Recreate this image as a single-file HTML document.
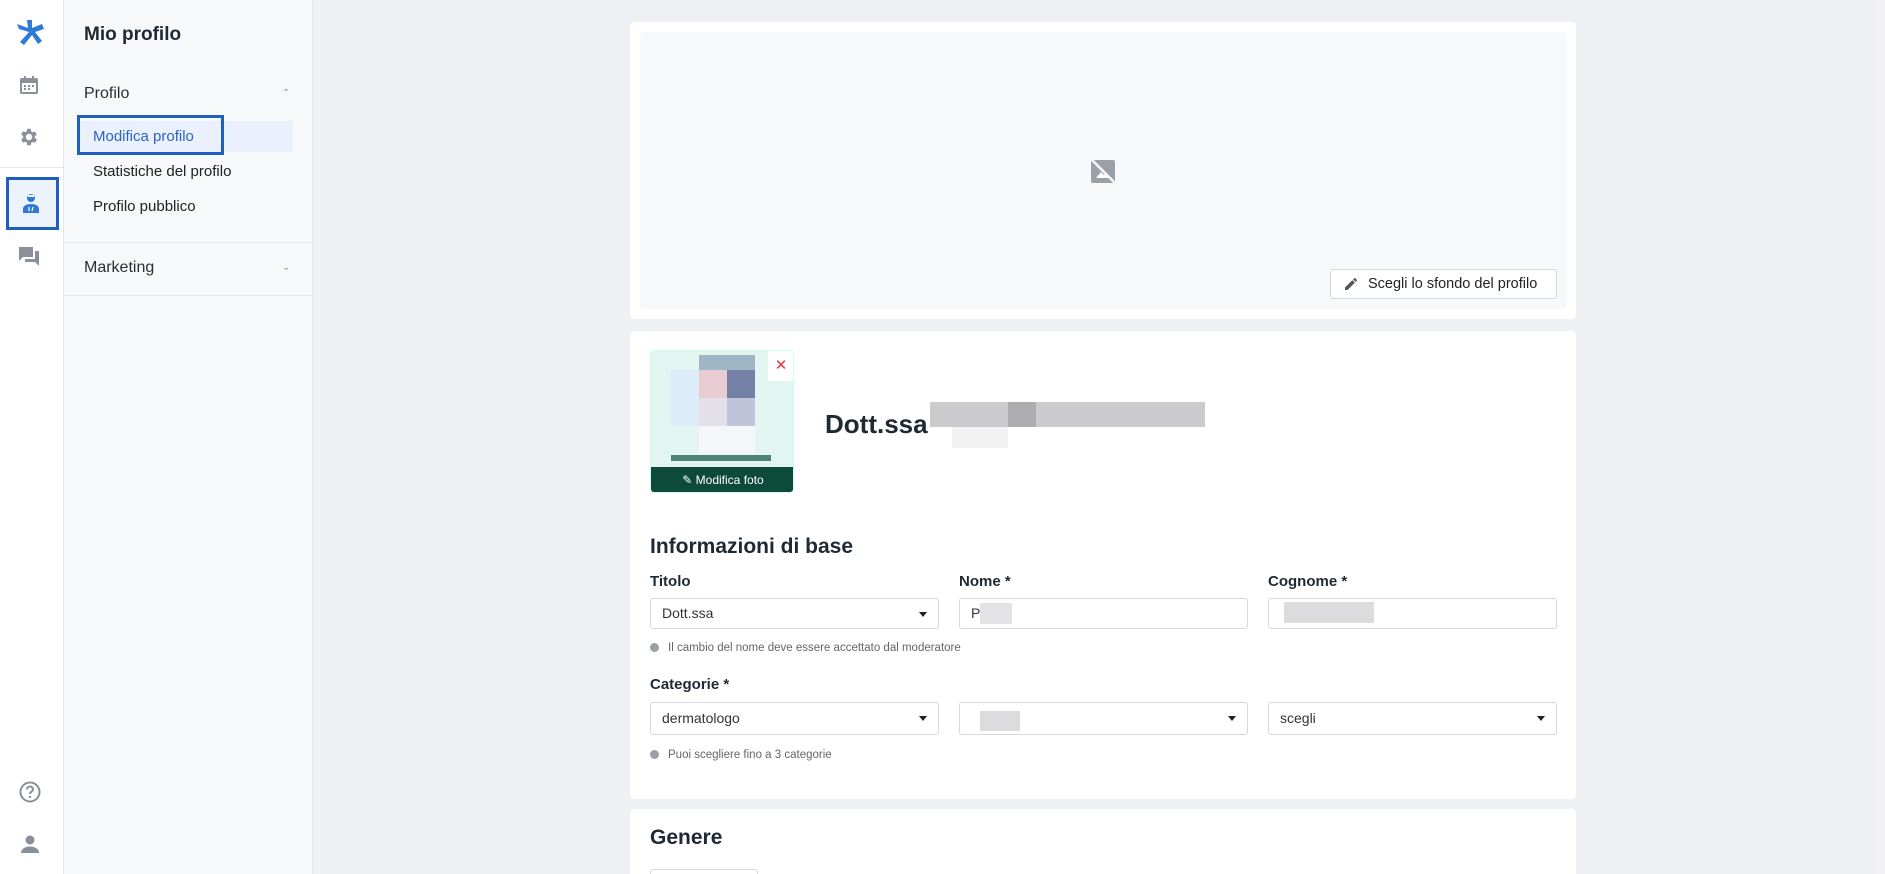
<!DOCTYPE html>
<html style="overflow:hidden;height:874px"><head><meta charset="utf-8"><style>
*{box-sizing:border-box;margin:0;padding:0}
body{width:1885px;height:874px;overflow:hidden;background:#eef0f4;font-family:"Liberation Sans",Arial,sans-serif;color:#1f2933;position:relative}
.abs{position:absolute}
.rail{left:0;top:0;width:64px;height:874px;background:#fff;border-right:1px solid #e3e6ea}
.side{left:64px;top:0;width:249px;height:874px;background:#f7f8fa;border-right:1px solid #e3e6ea}
.card{background:#fff;border-radius:4px;position:absolute}
.lbl{font-size:15px;font-weight:bold;color:#1f2933}
.field{position:absolute;height:31px;border:1px solid #d5d9de;border-radius:3px;background:#fff;font-size:14px;padding:0 11px;line-height:29px;color:#333}
.caret{position:absolute;right:11px;top:13px;width:0;height:0;border-left:4px solid transparent;border-right:4px solid transparent;border-top:5px solid #222}
.note{font-size:11.5px;color:#666;position:absolute}
.note:before{content:"";display:inline-block;width:9px;height:9px;border-radius:50%;background:#9aa0a6;margin-right:9px;vertical-align:-1px}
.blur{position:absolute;background:#d9d9dc}
</style></head><body>
<div class="abs rail">
 <svg class="abs" style="left:17px;top:20px" width="28" height="26" viewBox="0 0 28 26"><g fill="#2f7ad8"><path d="M2 9l10 3-9 10 4 3 8-10 6 9 4-3-7-9 9-3-2-5-10 4 0-8h-5l1 8-11-4z"/></g></svg>
 <svg class="abs" style="left:19px;top:75px" width="20" height="20" viewBox="0 0 20 20"><rect x="1" y="3" width="18" height="16" rx="2" fill="#8a9099"/><rect x="3" y="8" width="14" height="9" fill="#fff"/><rect x="5" y="1" width="2" height="4" fill="#8a9099"/><rect x="13" y="1" width="2" height="4" fill="#8a9099"/><g fill="#8a9099"><rect x="5" y="10" width="2" height="2"/><rect x="9" y="10" width="2" height="2"/><rect x="13" y="10" width="2" height="2"/><rect x="5" y="13" width="2" height="2"/><rect x="9" y="13" width="2" height="2"/></g></svg>
 <svg class="abs" style="left:18px;top:126px" width="22" height="22" viewBox="0 0 24 24"><path fill="#8a9099" d="M19.4 13a7.5 7.5 0 000-2l2.1-1.6-2-3.5-2.5 1a7 7 0 00-1.7-1L15 3h-4l-.4 2.7a7 7 0 00-1.7 1l-2.5-1-2 3.5L6.6 11a7.5 7.5 0 000 2l-2.1 1.6 2 3.5 2.5-1a7 7 0 001.7 1L11 21h4l.4-2.7a7 7 0 001.7-1l2.5 1 2-3.5zM13 15.5a3.5 3.5 0 110-7 3.5 3.5 0 010 7z" transform="translate(-1 0)"/></svg>
 <div class="abs" style="left:0;top:167px;width:64px;height:1px;background:#e3e6ea"></div>
 <div class="abs" style="left:6px;top:177px;width:53px;height:53px;border:3px solid #1e5fbf;background:#edf3fd"></div>
 <svg class="abs" style="left:21px;top:192px" width="20" height="22" viewBox="0 0 20 22"><circle cx="10" cy="6" r="4" fill="#2f7ad8"/><rect x="7" y="3" width="6" height="2" fill="#fff"/><path d="M2 21v-4c0-3 3-5 8-5s8 2 8 5v4z" fill="#2f7ad8"/><path d="M8 15v4M12 15l-1 4" stroke="#fff" stroke-width="1.3"/></svg>
 <svg class="abs" style="left:18px;top:245px" width="22" height="22" viewBox="0 0 22 22"><path d="M1 2h14v10H5l-4 4z" fill="#8a9099"/><path d="M17 6h4v15l-4-4H7v-3h10z" fill="#8a9099"/></svg>
 <svg class="abs" style="left:19px;top:781px" width="22" height="22" viewBox="0 0 22 22"><circle cx="11" cy="11" r="9.5" fill="none" stroke="#8a9099" stroke-width="2"/><path d="M8 8.5a3 3 0 116 0c0 2-3 2.2-3 4.5" fill="none" stroke="#8a9099" stroke-width="2"/><circle cx="11" cy="16" r="1.2" fill="#8a9099"/></svg>
 <svg class="abs" style="left:20px;top:834px" width="20" height="20" viewBox="0 0 20 20"><circle cx="10" cy="6" r="4.5" fill="#8a9099"/><path d="M1 19c0-4 4-6.5 9-6.5s9 2.5 9 6.5z" fill="#8a9099"/></svg>
</div>
<div class="abs side">
 <div class="abs" style="left:20px;top:24px;font-size:19px;font-weight:bold;color:#1f2933">Mio profilo</div>
 <div class="abs" style="left:20px;top:85px;font-size:16px;color:#2a2f36">Profilo</div>
 <div class="abs" style="left:218px;top:88px;font-size:10px;color:#999">&#8963;</div>
 <div class="abs" style="left:15px;top:121px;width:214px;height:31px;background:#eaf1fc"></div>
 <div class="abs" style="left:13px;top:115px;width:147px;height:40px;border:3px solid #1e5fbf"></div>
 <div class="abs" style="left:29px;top:128px;font-size:15px;color:#2a64c8">Modifica profilo</div>
 <div class="abs" style="left:29px;top:163px;font-size:15px;color:#222">Statistiche del profilo</div>
 <div class="abs" style="left:29px;top:198px;font-size:15px;color:#222">Profilo pubblico</div>
 <div class="abs" style="left:0;top:242px;width:249px;height:1px;background:#e3e6ea"></div>
 <div class="abs" style="left:20px;top:259px;font-size:16px;color:#2a2f36">Marketing</div>
 <div class="abs" style="left:218px;top:262px;font-size:10px;color:#999">&#8964;</div>
 <div class="abs" style="left:0;top:295px;width:249px;height:1px;background:#e3e6ea"></div>
</div>
<div class="card" style="left:630px;top:22px;width:946px;height:297px">
 <div class="abs" style="left:10px;top:10px;width:927px;height:277px;background:#f7f8fa;border-radius:4px"></div>
 <svg class="abs" style="left:461px;top:137px" width="25" height="25" viewBox="0 0 25 25"><rect x="0" y="1" width="24" height="23" rx="2" fill="#9aa0a8"/><path d="M5 19l5-6 3 3 2-2 4 5z" fill="#fff"/><path d="M0 0l25 25" stroke="#f7f8fa" stroke-width="2.5"/></svg>
 <div class="abs" style="left:700px;top:247px;width:227px;height:30px;background:#fff;border:1px solid #d5d9de;border-radius:3px;font-size:14.5px;line-height:28px;padding-left:37px;color:#222">Scegli lo sfondo del profilo</div>
 <svg class="abs" style="left:714px;top:255px" width="14" height="14" viewBox="0 0 14 14"><path d="M1 10.5V13h2.5l7.4-7.4-2.5-2.5zM12.8 3.7a.7.7 0 000-1L11.3 1.2a.7.7 0 00-1 0l-1.2 1.2 2.5 2.5z" fill="#555"/></svg>
</div>
<div class="card" style="left:630px;top:331px;width:946px;height:468px">
 <div class="abs" style="left:20px;top:19px;width:144px;height:143px;border-radius:4px;background:#e2f5f1;overflow:hidden;border:1px solid #cfe">
  <div class="abs" style="left:48px;top:4px;width:56px;height:15px;background:#9fb6c6"></div>
  <div class="abs" style="left:48px;top:19px;width:28px;height:28px;background:#e8ccd2"></div>
  <div class="abs" style="left:76px;top:19px;width:28px;height:28px;background:#7580a6"></div>
  <div class="abs" style="left:20px;top:19px;width:28px;height:56px;background:#dcecf8"></div>
  <div class="abs" style="left:48px;top:47px;width:28px;height:28px;background:#e4e0ea"></div>
  <div class="abs" style="left:76px;top:47px;width:28px;height:28px;background:#c0c4da"></div>
  <div class="abs" style="left:48px;top:75px;width:56px;height:28px;background:#f4f6fa"></div>
  <div class="abs" style="left:20px;top:104px;width:100px;height:6px;background:#4f8375"></div>
  <div class="abs" style="left:117px;top:0;width:26px;height:30px;background:#fff;color:#e03a3a;font-size:15px;text-align:center;line-height:30px">&#x2715;</div>
  <div class="abs" style="left:0;top:116px;width:144px;height:27px;background:#0d4a3a;color:#fff;font-size:12px;text-align:center;line-height:27px">&#9998; Modifica foto</div>
 </div>
 <div class="abs" style="left:195px;top:78px;font-size:26px;font-weight:bold;color:#1f2933">Dott.ssa</div>
 <div class="blur" style="left:300px;top:71px;width:275px;height:25px;background:#cbcbce"></div>
 <div class="blur" style="left:378px;top:71px;width:28px;height:25px;background:#adadb0"></div>
 <div class="blur" style="left:322px;top:96px;width:56px;height:21px;background:#f2f2f3"></div>
 <div class="abs" style="left:20px;top:204px;font-size:21px;font-weight:bold;color:#1f2933">Informazioni di base</div>
 <div class="abs lbl" style="left:20px;top:242px">Titolo</div>
 <div class="abs lbl" style="left:329px;top:242px">Nome *</div>
 <div class="abs lbl" style="left:638px;top:242px">Cognome *</div>
 <div class="field" style="left:20px;top:267px;width:289px">Dott.ssa<div class="caret"></div></div>
 <div class="field" style="left:329px;top:267px;width:289px">P<div class="blur" style="left:20px;top:4px;width:32px;height:21px;background:#e3e3e6"></div></div>
 <div class="field" style="left:638px;top:267px;width:289px"><div class="blur" style="left:15px;top:3px;width:90px;height:21px;background:#dcdcdf"></div></div>
 <div class="note" style="left:20px;top:311px">Il cambio del nome deve essere accettato dal moderatore</div>
 <div class="abs lbl" style="left:20px;top:345px">Categorie *</div>
 <div class="field" style="left:20px;top:371px;width:289px;height:33px;line-height:31px">dermatologo<div class="caret"></div></div>
 <div class="field" style="left:329px;top:371px;width:289px;height:33px"><div class="blur" style="left:20px;top:8px;width:40px;height:20px;background:#dcdcdf"></div><div class="caret"></div></div>
 <div class="field" style="left:638px;top:371px;width:289px;height:33px;line-height:31px">scegli<div class="caret"></div></div>
 <div class="note" style="left:20px;top:418px">Puoi scegliere fino a 3 categorie</div>
</div>
<div class="card" style="left:630px;top:809px;width:946px;height:65px;border-radius:4px 4px 0 0;overflow:hidden">
 <div class="abs" style="left:20px;top:17px;font-size:21px;font-weight:bold;color:#1f2933">Genere</div>
 <div class="abs" style="left:20px;top:60px;width:108px;height:30px;border:1px solid #d5d9de;border-radius:3px"></div>
</div>
<div class="abs" style="left:1876px;top:0;width:9px;height:874px;background:#f1f1f1"></div>
</body></html>
